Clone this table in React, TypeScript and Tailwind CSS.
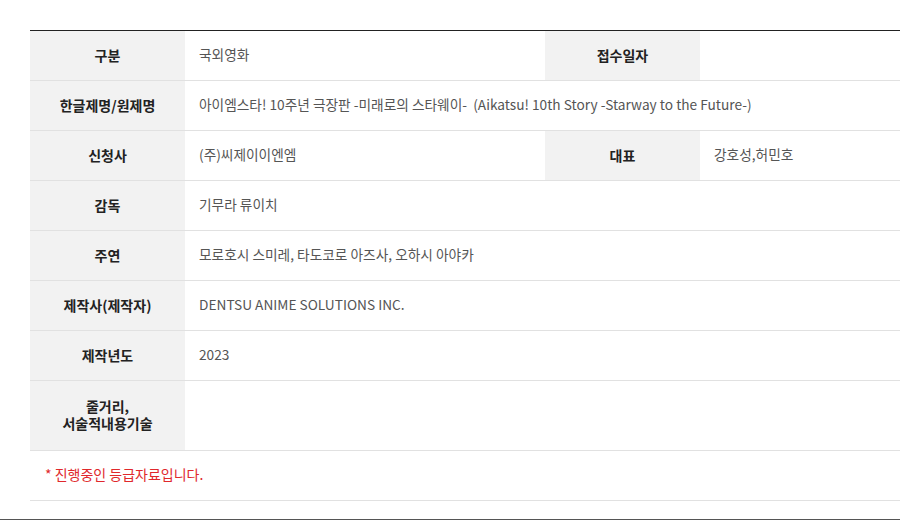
import React from 'react';

const font = { fontFamily: '"Noto Sans CJK KR", "Noto Sans", sans-serif' };

const Label: React.FC<{ children: React.ReactNode; className?: string }> = ({ children, className = '' }) => (
  <div className={`flex flex-col items-center justify-center bg-[#f2f2f2] text-[14px] font-bold text-[#222] text-center leading-[18px] pb-[2px] border-b border-[#e1e1e1] ${className}`}>
    {children}
  </div>
);

const Value: React.FC<{ children?: React.ReactNode; className?: string }> = ({ children, className = '' }) => (
  <div className={`flex items-center px-[14px] pb-[2px] text-[13.7px] text-[#555] border-b border-[#e1e1e1] whitespace-nowrap ${className}`}>
    {children}
  </div>
);

const App: React.FC = () => {
  return (
    <div className="w-[900px] h-[520px] bg-white overflow-hidden" style={font}>
      <div className="pl-[30px] pt-[30px]">
        <div className="grid grid-cols-[155px_360px_155px_215px] grid-rows-[repeat(7,50px)_70px_50px] border-t border-[#222]">
          <Label>구분</Label>
          <Value>국외영화</Value>
          <Label>접수일자</Label>
          <Value />

          <Label>한글제명/원제명</Label>
          <Value className="col-span-3">
            아이엠스타! 10주년 극장판 -미래로의 스타웨이-&nbsp;&nbsp;(Aikatsu! 10th Story -Starway to the Future-)
          </Value>

          <Label>신청사</Label>
          <Value>(주)씨제이이엔엠</Value>
          <Label>대표</Label>
          <Value>강호성,허민호</Value>

          <Label>감독</Label>
          <Value className="col-span-3">기무라 류이치</Value>

          <Label>주연</Label>
          <Value className="col-span-3">모로호시 스미레, 타도코로 아즈사, 오하시 아야카</Value>

          <Label>제작사(제작자)</Label>
          <Value className="col-span-3">DENTSU ANIME SOLUTIONS INC.</Value>

          <Label>제작년도</Label>
          <Value className="col-span-3">2023</Value>

          <Label>
            <div className="leading-[17px]">줄거리,</div>
            <div className="leading-[17px]">서술적내용기술</div>
          </Label>
          <Value className="col-span-3" />

          <div className="col-span-4 flex items-center pl-[15px] pb-[2px] text-[14px] text-[#e0282c] border-b border-[#e1e1e1]">
            * 진행중인 등급자료입니다.
          </div>
        </div>
      </div>
      <div className="mt-[18px] h-[2px] bg-[#555]" />
    </div>
  );
};

export default App;
